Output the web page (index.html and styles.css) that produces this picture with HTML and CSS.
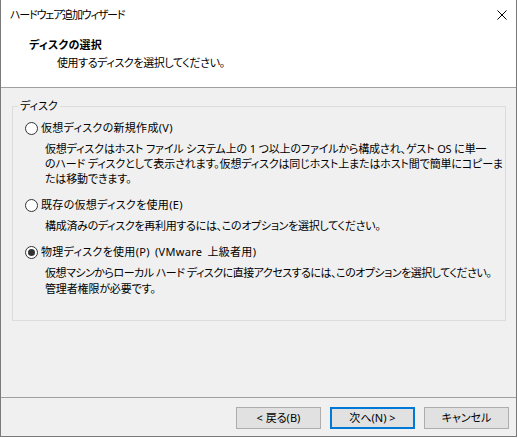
FILE: index.html
```html
<!DOCTYPE html>
<html lang="ja">
<head>
<meta charset="utf-8">
<title>ハードウェア追加ウィザード</title>
<link rel="stylesheet" href="styles.css">
</head>
<body>
<div class="window">
  <div class="titlebar">
    <span class="title">ハードウェア追加ウィザード</span>
    <svg class="close" width="10" height="10" viewBox="0 0 10 10"><path d="M0.5 0.5 L9.5 9.5 M9.5 0.5 L0.5 9.5" stroke="#000" stroke-width="1" fill="none"/></svg>
  </div>
  <div class="header">
    <div class="h-title">ディスクの選択</div>
    <div class="h-sub">使用するディスクを選択してください。</div>
  </div>
  <div class="body">
    <fieldset class="group">
      <legend class="legend">ディスク</legend>
      <div class="option first">
        <div class="opt-label"><span class="radio"></span>仮想ディスクの新規作成(V)</div>
        <div class="desc">仮想ディスクはホスト ファイル システム上の 1 つ以上のファイルから構成され、ゲスト OS に単一<br>のハード ディスクとして表示されます。仮想ディスクは同じホスト上またはホスト間で簡単にコピーま<br>たは移動できます。</div>
      </div>
      <div class="option">
        <div class="opt-label"><span class="radio"></span>既存の仮想ディスクを使用(E)</div>
        <div class="desc tight">構成済みのディスクを再利用するには、このオプションを選択してください。</div>
      </div>
      <div class="option">
        <div class="opt-label"><span class="radio checked"></span>物理ディスクを使用(P) (VMware 上級者用)</div>
        <div class="desc last"><span class="tighter">仮想マシンからローカル ハード ディスクに直接アクセスするには、このオプションを選択してください。</span><br>管理者権限が必要です。</div>
      </div>
    </fieldset>
  </div>
  <div class="footer">
    <button class="btn">&lt; 戻る(B)</button>
    <button class="btn default">次へ(N) &gt;</button>
    <button class="btn">キャンセル</button>
  </div>
</div>
</body>
</html>
```

FILE: styles.css
```css
html, body {
  margin: 0;
  padding: 0;
  background: #ffffff;
}

body {
  font-family: "Noto Sans", "Noto Sans CJK JP", sans-serif;
  font-size: 11px;
  font-feature-settings: "palt";
  color: #000;
}

.window {
  width: 517px;
  height: 437px;
  box-sizing: border-box;
  border: 1px solid #7a7a7a;
  border-top: none;
  background: #f0f0f0;
  display: flex;
  flex-direction: column;
}

.titlebar {
  height: 30px;
  flex: none;
  background: #ffffff;
  display: flex;
  align-items: center;
  justify-content: space-between;
  padding: 0 9px 0 9px;
  line-height: 16px;
}

.title {
  letter-spacing: -1.2px;
}

.close {
  display: block;
}

.header {
  height: 57px;
  flex: none;
  box-sizing: content-box;
  background: #ffffff;
  border-bottom: 1px solid #a0a0a0;
  padding-left: 28px;
}

.h-title {
  font-weight: bold;
  line-height: 16px;
  margin-top: 7px;
  letter-spacing: 0.2px;
}

.h-sub {
  line-height: 16px;
  margin-top: 2px;
  padding-left: 28px;
  letter-spacing: -0.4px;
}

.body {
  flex: 1;
  padding: 10px 10px 0 11px;
}

.group {
  margin: 0;
  padding: 0 0 23px 0;
  border: 1px solid #dcdcdc;
  min-width: 0;
}

.legend {
  margin-left: 5px;
  padding: 0 2px;
  line-height: 16px;
}

.option {
  padding-left: 12px;
  margin-top: 11px;
}

.option.first {
  margin-top: 6px;
}

.opt-label {
  display: flex;
  align-items: center;
  line-height: 16px;
  white-space: pre;
  letter-spacing: 0.3px;
  word-spacing: 2px;
}

.radio {
  width: 13px;
  height: 13px;
  box-sizing: border-box;
  border: 1px solid #333333;
  border-radius: 50%;
  background: #ffffff;
  margin-right: 3px;
  display: flex;
  align-items: center;
  justify-content: center;
  flex: none;
}

.radio.checked::after {
  content: "";
  width: 7px;
  height: 7px;
  border-radius: 50%;
  background: #333333;
}

.desc {
  padding-left: 20px;
  margin-top: 5px;
  line-height: 15px;
  white-space: nowrap;
  letter-spacing: -0.15px;
}

.desc.tight {
  letter-spacing: -0.3px;
}

.desc.last {
  line-height: 16px;
}

.tighter {
  letter-spacing: -0.5px;
}

.footer {
  flex: none;
  border-top: 1px solid #a0a0a0;
  padding: 9px 7px 7px 0;
  display: flex;
  justify-content: flex-end;
  gap: 9px;
}

.btn {
  width: 85px;
  height: 22px;
  box-sizing: border-box;
  border: 1px solid #adadad;
  background: #e1e1e1;
  font-family: "Noto Sans", "Noto Sans CJK JP", sans-serif;
  font-size: 11px;
  font-feature-settings: "palt";
  color: #000;
  padding: 0;
  margin: 0;
  line-height: 18px;
}

.btn.default {
  border: 2px solid #0078d7;
}
```
